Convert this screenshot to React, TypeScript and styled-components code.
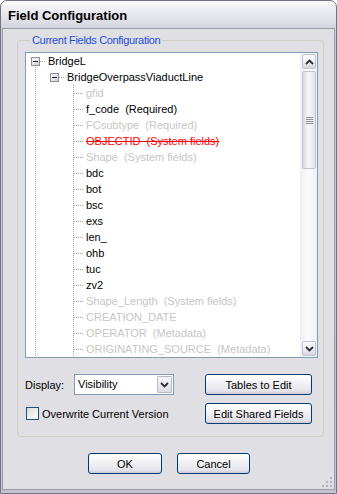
import React from 'react'
import styled, { createGlobalStyle } from 'styled-components'

type Tone = 'normal' | 'muted' | 'removed'
type Link = 'pass' | 'blank' | 'root' | 'branch' | 'leaf'

interface Field {
  name: string
  note?: string
  tone: Tone
}

const fields: Field[] = [
  { name: 'gfid', tone: 'muted' },
  { name: 'f_code', note: 'Required', tone: 'normal' },
  { name: 'FCsubtype', note: 'Required', tone: 'muted' },
  { name: 'OBJECTID', note: 'System fields', tone: 'removed' },
  { name: 'Shape', note: 'System fields', tone: 'muted' },
  { name: 'bdc', tone: 'normal' },
  { name: 'bot', tone: 'normal' },
  { name: 'bsc', tone: 'normal' },
  { name: 'exs', tone: 'normal' },
  { name: 'len_', tone: 'normal' },
  { name: 'ohb', tone: 'normal' },
  { name: 'tuc', tone: 'normal' },
  { name: 'zv2', tone: 'normal' },
  { name: 'Shape_Length', note: 'System fields', tone: 'muted' },
  { name: 'CREATION_DATE', tone: 'muted' },
  { name: 'OPERATOR', note: 'Metadata', tone: 'muted' },
  { name: 'ORIGINATING_SOURCE', note: 'Metadata', tone: 'muted' },
]

const GlobalStyle = createGlobalStyle`
  html, body {
    margin: 0;
    padding: 0;
    background: #ffffff;
  }
  body {
    font-family: "Liberation Sans", Arial, sans-serif;
    font-size: 11px;
    color: #000;
  }
`

const Window = styled.div`
  width: 337px;
  height: 494px;
  box-sizing: border-box;
  display: flex;
  flex-direction: column;
  border: 1px solid #737383;
  border-radius: 7px 7px 0 0;
  padding: 0 1px 3px 1px;
  background: linear-gradient(#fbfbfd 0px, #e9e9f0 12px, #d6d6e0 26px, #c9c9d4 40px, #c4c4cf 100%);
  overflow: hidden;
`

const TitleBar = styled.div`
  height: 27px;
  display: flex;
  align-items: center;
  padding-left: 6px;
  padding-top: 1px;
  box-sizing: border-box;
  font-size: 13px;
  font-weight: bold;
  color: #000;
  flex-shrink: 0;
`

const Client = styled.div`
  flex: 1;
  position: relative;
  display: flex;
  flex-direction: column;
  border: 1px solid #9c9ba8;
  background: #e0dfe3;
  padding-top: 5px;
`

const GroupBox = styled.fieldset`
  margin: 0 10px 0 14px;
  padding: 5px 5px 12px 7px;
  border: 1px solid #cfcfc4;
  border-radius: 4px;
  min-width: 0;
`

const Legend = styled.legend`
  padding: 0 2px;
  margin-left: 5px;
  line-height: 13px;
  color: #1f4fd8;
  letter-spacing: -0.33px;
`

const TreeBox = styled.div`
  height: 306px;
  box-sizing: border-box;
  border: 1px solid #7f9db9;
  background: #ffffff;
  display: flex;
`

const TreeList = styled.div`
  flex: 1;
  overflow: hidden;
  padding-left: 0;
`

const Row = styled.div`
  height: 16px;
  display: flex;
  align-items: center;
  white-space: pre;
`

const Label = styled.span<{ $tone: Tone }>`
  padding-left: 3px;
  line-height: 16px;
  color: ${(p) => (p.$tone === 'muted' ? '#c6c6c6' : p.$tone === 'removed' ? '#ff0000' : '#000000')};
  text-decoration: ${(p) => (p.$tone === 'removed' ? 'line-through' : 'none')};
`

const Scrollbar = styled.div`
  width: 17px;
  flex-shrink: 0;
  display: flex;
  flex-direction: column;
  background: linear-gradient(to right, #f0f0f4, #fbfbfd 50%, #f0f0f4);
`

const ArrowButton = styled.div`
  height: 15px;
  margin: 1px 1px 1px 2px;
  box-sizing: border-box;
  border: 1px solid #c3c3d0;
  border-radius: 2px;
  background: linear-gradient(#fbfbfd, #e6e6ee 70%, #d4d4de);
  display: flex;
  align-items: center;
  justify-content: center;
`

const Track = styled.div`
  flex: 1;
  display: flex;
  flex-direction: column;
`

const Thumb = styled.div`
  height: 98px;
  margin: 1px 1px 0 2px;
  box-sizing: border-box;
  border: 1px solid #c3c3d0;
  border-radius: 2px;
  background: linear-gradient(to right, #d8d8e2, #f6f6fa 45%, #e4e4ec);
  display: flex;
  align-items: center;
  justify-content: center;
`

const Grip = styled.div`
  width: 7px;
  height: 7px;
  background: repeating-linear-gradient(#8e8e9e 0px, #8e8e9e 1px, transparent 1px, transparent 2px);
`

const Controls = styled.div`
  margin-top: 16px;
  display: flex;
  justify-content: space-between;
  padding-right: 6px;
`

const ControlColumn = styled.div`
  display: flex;
  flex-direction: column;
  gap: 8px;
`

const ControlRow = styled.div`
  height: 21px;
  display: flex;
  align-items: center;
`

const FieldLabel = styled.span`
  width: 49px;
`

const Select = styled.div`
  width: 100px;
  height: 21px;
  box-sizing: border-box;
  border: 1px solid #7f9db9;
  background: #ffffff;
  display: flex;
  align-items: stretch;
`

const SelectValue = styled.span`
  flex: 1;
  padding-left: 3px;
  line-height: 19px;
`

const SelectButton = styled.div`
  width: 15px;
  margin: 1px;
  box-sizing: border-box;
  border: 1px solid #b9b9c7;
  border-radius: 1px;
  background: linear-gradient(#f6f6fa, #dcdce6);
  display: flex;
  align-items: center;
  justify-content: center;
`

const CheckBox = styled.span`
  width: 13px;
  height: 13px;
  box-sizing: border-box;
  margin-left: 1px;
  margin-right: 3px;
  border: 1px solid #1c5180;
  background: linear-gradient(135deg, #dcdcd7, #ffffff);
`

const Button = styled.button<{ $w: number }>`
  width: ${(p) => p.$w}px;
  height: 21px;
  padding: 0;
  box-sizing: border-box;
  border: 1px solid #003c74;
  border-radius: 3px;
  background: linear-gradient(#ffffff, #f3f3f6 40%, #e4e3ea 85%, #cdcbd8);
  font-family: "Liberation Sans", Arial, sans-serif;
  font-size: 11px;
  color: #000;
`

const Footer = styled.div`
  margin-top: 16px;
  display: flex;
  justify-content: center;
  gap: 15px;
  padding-left: 1px;
`

const ResizeGrip = styled.svg`
  position: absolute;
  right: 1px;
  bottom: 1px;
`

const Chevron = ({ up }: { up?: boolean }) => (
  <svg width="9" height="6" viewBox="0 0 9 6">
    <polyline
      points={up ? '1,5 4.5,1.5 8,5' : '1,1 4.5,4.5 8,1'}
      fill="none"
      stroke="#2b2b33"
      strokeWidth="1.8"
    />
  </svg>
)

const dots = { stroke: '#a3a3a3', strokeDasharray: '1 1', shapeRendering: 'crispEdges' as const }

const Connector = ({ link }: { link: Link }) => (
  <svg width="19" height="16" viewBox="0 0 19 16" style={{ flexShrink: 0 }}>
    {(link === 'pass' || link === 'leaf') && <line x1="9.5" y1="0" x2="9.5" y2="16" {...dots} />}
    {link === 'leaf' && <line x1="10" y1="8.5" x2="19" y2="8.5" {...dots} />}
    {(link === 'root' || link === 'branch') && (
      <>
        {link === 'root' && <line x1="9.5" y1="14" x2="9.5" y2="16" {...dots} />}
        <line x1="14" y1="8.5" x2="19" y2="8.5" {...dots} />
        <rect x="5.5" y="4.5" width="8" height="8" fill="url(#boxFill)" stroke="#8f8f9a" shapeRendering="crispEdges" />
        <line x1="7" y1="8.5" x2="12" y2="8.5" stroke="#1a1a1a" shapeRendering="crispEdges" />
      </>
    )}
  </svg>
)

const TreeRow = ({ links, children }: { links: Link[]; children: React.ReactNode }) => (
  <Row>
    {links.map((l, i) => (
      <Connector key={i} link={l} />
    ))}
    {children}
  </Row>
)

const App = () => {
  return (
    <>
      <GlobalStyle />
      <svg width="0" height="0" style={{ position: 'absolute' }}>
        <defs>
          <linearGradient id="boxFill" x1="0" y1="0" x2="1" y2="1">
            <stop offset="0" stopColor="#ffffff" />
            <stop offset="1" stopColor="#cdcdd6" />
          </linearGradient>
        </defs>
      </svg>
      <Window>
        <TitleBar>Field Configuration</TitleBar>
        <Client>
          <GroupBox>
            <Legend>Current Fields Configuration</Legend>
            <TreeBox>
              <TreeList>
                <TreeRow links={['root']}>
                  <Label $tone="normal">BridgeL</Label>
                </TreeRow>
                <TreeRow links={['pass', 'branch']}>
                  <Label $tone="normal">BridgeOverpassViaductLine</Label>
                </TreeRow>
                {fields.map((f) => (
                  <TreeRow key={f.name} links={['pass', 'blank', 'leaf']}>
                    <Label $tone={f.tone}>{f.note ? `${f.name}  (${f.note})` : f.name}</Label>
                  </TreeRow>
                ))}
              </TreeList>
              <Scrollbar>
                <ArrowButton>
                  <Chevron up />
                </ArrowButton>
                <Track>
                  <Thumb>
                    <Grip />
                  </Thumb>
                </Track>
                <ArrowButton>
                  <Chevron />
                </ArrowButton>
              </Scrollbar>
            </TreeBox>
            <Controls>
              <ControlColumn>
                <ControlRow>
                  <FieldLabel>Display:</FieldLabel>
                  <Select>
                    <SelectValue>Visibility</SelectValue>
                    <SelectButton>
                      <Chevron />
                    </SelectButton>
                  </Select>
                </ControlRow>
                <ControlRow>
                  <CheckBox />
                  <span>Overwrite Current Version</span>
                </ControlRow>
              </ControlColumn>
              <ControlColumn>
                <Button $w={107}>Tables to Edit</Button>
                <Button $w={107}>Edit Shared Fields</Button>
              </ControlColumn>
            </Controls>
          </GroupBox>
          <Footer>
            <Button $w={74}>OK</Button>
            <Button $w={73}>Cancel</Button>
          </Footer>
          <ResizeGrip width="12" height="12" viewBox="0 0 12 12">
            {[
              [9, 1], [9, 5], [5, 5], [9, 9], [5, 9], [1, 9],
            ].map(([x, y]) => (
              <rect key={`${x}-${y}`} x={x} y={y} width="2" height="2" fill="#b4b4bc" />
            ))}
          </ResizeGrip>
        </Client>
      </Window>
    </>
  )
}

export default App
